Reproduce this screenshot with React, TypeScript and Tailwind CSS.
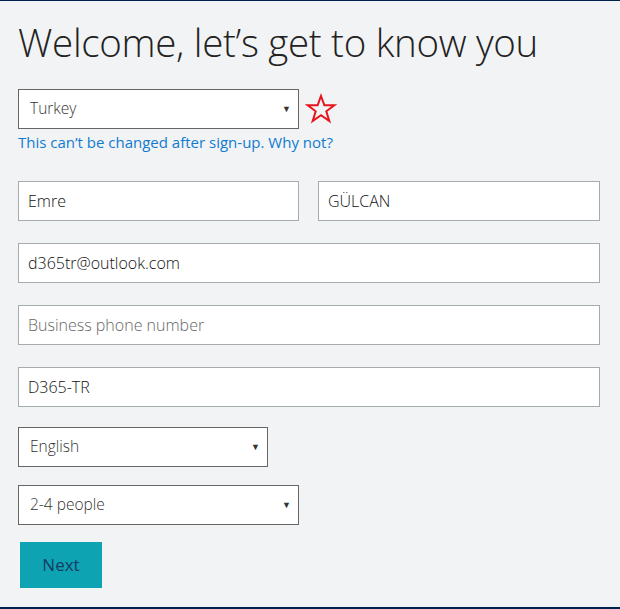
import { ChangeEvent, useState } from 'react';

const font = { fontFamily: '"Open Sans", "Noto Sans", sans-serif' };

function Field({
  value,
  placeholder,
  width = 'w-full',
  onChange,
}: {
  value: string;
  placeholder?: string;
  width?: string;
  onChange: (v: string) => void;
}) {
  return (
    <input
      value={value}
      placeholder={placeholder}
      onChange={(e: ChangeEvent<HTMLInputElement>) => onChange(e.target.value)}
      className={`${width} h-10 border border-[#a4acae] bg-white px-[9px] text-[16px] font-light text-[#111] outline-none placeholder:text-[#666]`}
    />
  );
}

function Select({ value, width }: { value: string; width: string }) {
  return (
    <div
      className={`${width} flex h-10 items-center justify-between border border-[#666] bg-white pl-[11px] pr-[7px]`}
    >
      <span className="text-[15.5px] font-light text-[#333]">{value}</span>
      <span className="text-[9px] text-[#333]">▼</span>
    </div>
  );
}

function App() {
  const [first, setFirst] = useState('Emre');
  const [last, setLast] = useState('GÜLCAN');
  const [email, setEmail] = useState('d365tr@outlook.com');
  const [phone, setPhone] = useState('');
  const [company, setCompany] = useState('D365-TR');

  return (
    <div
      style={font}
      className="h-[609px] w-[620px] border-t border-b-2 border-[#002050] bg-[#f2f3f5] pl-[18px]"
    >
      <h1 className="mt-[15px] text-[38.5px] font-light leading-[52px] tracking-[-0.3px] text-[#222]">
        Welcome, let’s get to know you
      </h1>

      <div className="mt-[21px] flex items-center gap-[6px]">
        <Select value="Turkey" width="w-[281px]" />
        <svg width="32" height="32" viewBox="0 0 32 32">
          <polygon
            points="16,3 19.4,12.3 29.3,12.3 21.3,18.3 24.3,28 16,22.2 7.7,28 10.7,18.3 2.7,12.3 12.6,12.3"
            fill="none"
            stroke="#e8141c"
            strokeWidth="2"
          />
        </svg>
      </div>
      <p className="mt-[2px] text-[15px] leading-[22px] text-[#0f7bd0]">
        This can’t be changed after sign-up. Why not?
      </p>

      <div className="mt-[28px] flex w-[582px] gap-[19px]">
        <Field value={first} onChange={setFirst} width="w-[281px]" />
        <Field value={last} onChange={setLast} width="w-[282px]" />
      </div>

      <div className="mt-[22px] flex w-[582px] flex-col gap-[22px]">
        <Field value={email} onChange={setEmail} />
        <Field value={phone} onChange={setPhone} placeholder="Business phone number" />
        <Field value={company} onChange={setCompany} />
      </div>

      <div className="mt-[20px] flex flex-col gap-[18px]">
        <Select value="English" width="w-[250px]" />
        <Select value="2-4 people" width="w-[281px]" />
      </div>

      <button className="mt-[17px] ml-[2px] h-[46px] w-[82px] bg-[#0ea3b2] text-[17px] text-[#143a66]">
        Next
      </button>
    </div>
  );
}

export default App;
